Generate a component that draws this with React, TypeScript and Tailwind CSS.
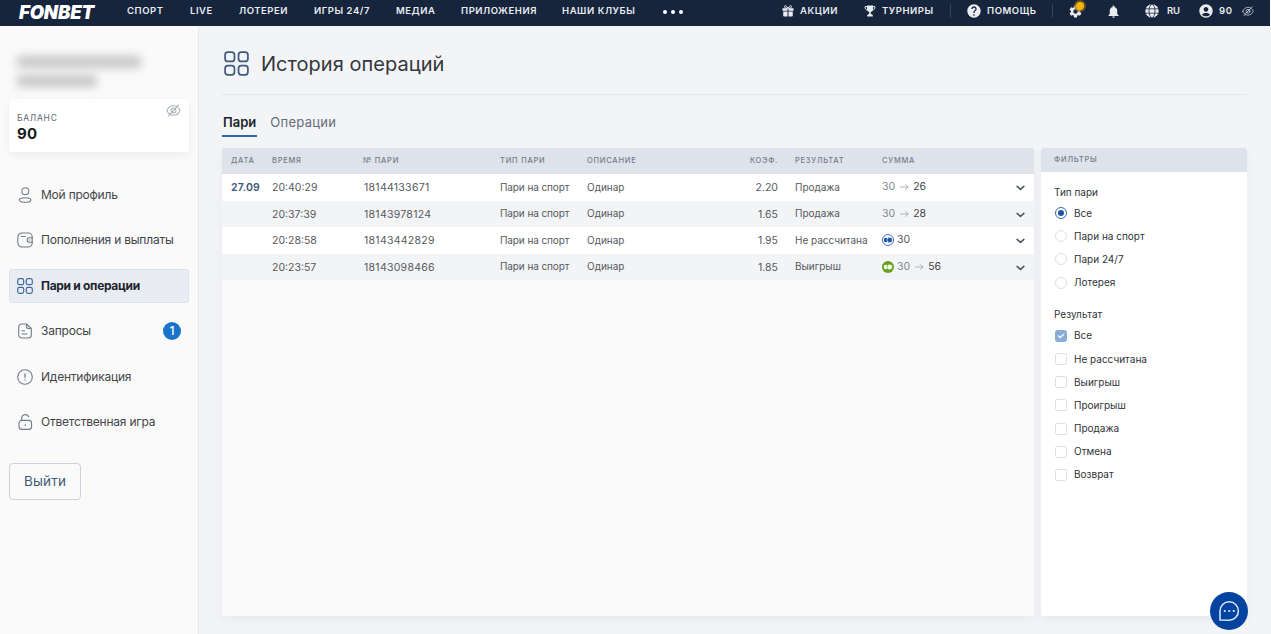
import type { ReactNode } from "react";
import { MdAccountCircle, MdHelp, MdNotifications, MdSettings } from "react-icons/md";

/** Common props for all outline icons */
const outline = {
  fill: "none",
  stroke: "currentColor",
  strokeWidth: 1.5,
  strokeLinecap: "round" as const,
  strokeLinejoin: "round" as const,
};

const Icons = {
  Grid: ({ className = "w-4 h-4", width = 1.2 }: { className?: string; width?: number }) => (
    <svg viewBox="0 0 16 16" className={className} {...outline} strokeWidth={width}>
      <rect x="0.7" y="0.7" width="6" height="6" rx="1.8" />
      <rect x="9.3" y="0.7" width="6" height="6" rx="1.8" />
      <rect x="0.7" y="9.3" width="6" height="6" rx="1.8" />
      <rect x="9.3" y="9.3" width="6" height="6" rx="1.8" />
    </svg>
  ),
  User: () => (
    <svg viewBox="0 0 16 16" className="w-4 h-4" {...outline} strokeWidth={1.1}>
      <circle cx="8.3" cy="4.2" r="3.5" />
      <ellipse cx="8.1" cy="13" rx="5.8" ry="2.3" />
    </svg>
  ),
  Wallet: () => (
    <svg viewBox="0 0 16 16" className="w-4 h-4" {...outline} strokeWidth={1.1}>
      <path d="M15.2 6.2V5a4 4 0 0 0-4-4H5a4.2 4.2 0 0 0-4.2 4.2v5.6A4.2 4.2 0 0 0 5 15h6.2a4 4 0 0 0 4-4V9.8M4.3 4.5h4" />
      <path d="M15.2 5.700h-2.700a2.300 2.300 0 0 0 0 4.600h2.700zM12.800 8h.4" />
    </svg>
  ),
  File: () => (
    <svg viewBox="0 0 16 16" className="w-4 h-4" {...outline} strokeWidth={1.1}>
      <path d="M9.5 1H5a3.3 3.3 0 0 0-3.3 3.3v7.4A3.3 3.3 0 0 0 5 15h6a3.3 3.3 0 0 0 3.3-3.3V5.5zM9.5 1v2.5a2 2 0 0 0 2 2h2.8M5 7.7h2.5M5 11h5" />
    </svg>
  ),
  Info: () => (
    <svg viewBox="0 0 16 16" className="w-4 h-4" {...outline} strokeWidth={1.1}>
      <circle cx="8" cy="8" r="7.3" />
      <path d="M8 4.800v3.700M8 11v.1" strokeWidth={1.3} />
    </svg>
  ),
  Lock: () => (
    <svg viewBox="0 0 16 16" className="w-4 h-4" {...outline} strokeWidth={1.1}>
      <rect x="2" y="6.4" width="12.6" height="9" rx="3" />
      <path d="M4.7 6.2V4.4a3.7 3.7 0 0 1 7-1.7M8.3 10.5v1" />
    </svg>
  ),
  EyeOff: ({ className }: { className?: string }) => (
    <svg viewBox="0 0 16 14" className={className} {...outline} strokeWidth={1.1}>
      <path d="M1 7c1-3 3.700-5.200 7-5.200S14 4 15 7c-1 3-3.700 5.200-7 5.200S2 10 1 7z" />
      <circle cx="8" cy="7" r="2.600" />
      <path d="M2.500 13 13.500 1M6 9l4-4.200" />
    </svg>
  ),
  Gift: () => (
    <svg viewBox="0 0 12 12" className="w-3 h-3" fill="currentColor">
      <path d="M.5 3.200h5v2.600h-5zM6.500 3.200h5v2.600h-5zM1.200 6.600h4.300v4.900H2.200a1 1 0 0 1-1-1zM6.500 6.600h4.300v3.900a1 1 0 0 1-1 1H6.500z" />
      <path d="M6 3.200C5 1 2.500-.2 2.400 1.700 2.300 3 4.500 3.200 6 3.200s3.700-.2 3.600-1.500C9.500-.2 7 1 6 3.200z" fill="none" stroke="currentColor" />
    </svg>
  ),
  Trophy: () => (
    <svg viewBox="0 0 12 12" className="w-3 h-3" fill="currentColor">
      <path d="M3 .5h6V4a3 3 0 0 1-6 0z" />
      <path d="M3 1.600H1.100C1 4 2 5 3.500 5M9 1.600h1.900C11 4 10 5 8.500 5" fill="none" stroke="currentColor" />
      <path d="M5.200 6h1.600v2.800l2 1.200v1.500H3.200V10l2-1.200z" />
    </svg>
  ),
  Globe: () => (
    <svg viewBox="0 0 14 14" className="w-3.5 h-3.5">
      <circle cx="7" cy="7" r="6.700" fill="currentColor" />
      <g fill="none" stroke="#16243c" strokeWidth="0.8">
        <ellipse cx="7" cy="7" rx="3" ry="6.700" />
        <path d="M.5 4.800h13M.5 9.200h13" />
      </g>
    </svg>
  ),
  Chevron: () => (
    <svg viewBox="0 0 10 6" className="w-[9px] h-[6px]" {...outline} strokeWidth={1.7}>
      <path d="M1.200 1.200 5 4.500l3.800-3.300" />
    </svg>
  ),
  Arrow: () => (
    <svg viewBox="0 0 9 8" className="w-[9px] h-2 text-[#a4a9b0]" {...outline} strokeWidth={0.9}>
      <path d="M.6 4h7.500M5.600 1.600 8.100 4 5.600 6.400" />
    </svg>
  ),
  Chat: () => (
    <svg viewBox="0 0 22 22" className="w-[22px] h-[22px]" {...outline}>
      <path d="M2 20V11a9.200 9.200 0 1 1 9.200 9.200z" />
      <path d="M6.700 11h.1M11.200 11h.1M15.700 11h.1" strokeWidth="2.100" />
    </svg>
  ),
};

/** Freebet mark next to the amount */
const CoinIcon = ({ won }: { won?: boolean }) => (
  <svg viewBox="0 0 12 12" className="w-3 h-3">
    {won ? (
      <circle cx="6" cy="6" r="6" fill="#65a11b" />
    ) : (
      <circle cx="6" cy="6" r="5.500" fill="#fff" stroke="#2a65ae" strokeWidth="0.9" />
    )}
    <circle cx="4" cy="6" r="2.200" fill={won ? "#fff" : "#1757a8"} />
    <circle cx="7.700" cy="6" r="2.700" fill={won ? "#fff" : "#1757a8"} stroke={won ? "#65a11b" : "#fff"} strokeWidth="0.6" />
  </svg>
);

const navItems = [
  { label: "СПОРТ", width: "w-[63px]" },
  { label: "LIVE", width: "w-[49px]" },
  { label: "ЛОТЕРЕИ", width: "w-[75px]" },
  { label: "ИГРЫ 24/7", width: "w-[82px]" },
  { label: "МЕДИА", width: "w-[65px]" },
  { label: "ПРИЛОЖЕНИЯ", width: "w-[101px]" },
  { label: "НАШИ КЛУБЫ", width: "w-[101px]" },
];

function Header() {
  return (
    <header className="flex h-[26px] w-[1270px] items-start bg-[#16243c] text-[9.500px] leading-5 font-semibold tracking-[0.55px] whitespace-nowrap text-[#e9edf2]">
      <div className="w-[127px] pt-0.5 pl-[19px]">
        <div className="text-[18.500px] leading-5 font-black tracking-[-0.15px] text-white italic">FONBET</div>
      </div>
      {navItems.map((item) => (
        <div key={item.label} className={`${item.width} pt-px`}>{item.label}</div>
      ))}
      <div className="flex w-[119px] gap-1 pt-[10px]">
        <i className="size-1 rounded-full bg-white" />
        <i className="size-1 rounded-full bg-white" />
        <i className="size-1 rounded-full bg-white" />
      </div>
      <div className="flex h-[22px] w-[82px] items-center gap-1.5"><Icons.Gift /><span>АКЦИИ</span></div>
      <div className="flex h-[22px] w-[86px] items-center gap-1.5"><Icons.Trophy /><span>ТУРНИРЫ</span></div>
      <div className="mt-1 h-3.5 w-4 border-l border-[#34435b]" />
      <div className="flex h-[22px] w-[86px] items-center gap-[5px]"><MdHelp className="size-4" /><span>ПОМОЩЬ</span></div>
      <div className="mt-1 h-3.5 w-4 border-l border-[#34435b]" />
      <div className="relative flex h-[22px] w-[38px] items-center">
        <MdSettings className="size-[15px]" />
        <i className="absolute top-0.5 left-[8px] size-2 rounded-full bg-[#f7b500] ring-2 ring-[#7f661f]/70" />
      </div>
      <div className="flex h-[22px] w-[39px] items-center"><MdNotifications className="size-[15px]" /></div>
      <div className="flex h-[22px] w-[53px] items-center gap-1.5"><Icons.Globe /><span className="pl-0.5 tracking-[-0.1px]">RU</span></div>
      <div className="flex h-[22px] items-center">
        <MdAccountCircle className="mr-[5px] size-4" />
        <span className="mr-2.5">90</span>
        <Icons.EyeOff className="w-3 text-[#c4cbd5]" />
      </div>
    </header>
  );
}

const menu: { label: string; icon: ReactNode; active?: boolean; badge?: number }[] = [
  { label: "Мой профиль", icon: <Icons.User /> },
  { label: "Пополнения и выплаты", icon: <Icons.Wallet /> },
  { label: "Пари и операции", icon: <Icons.Grid />, active: true },
  { label: "Запросы", icon: <Icons.File />, badge: 1 },
  { label: "Идентификация", icon: <Icons.Info /> },
  { label: "Ответственная игра", icon: <Icons.Lock /> },
];

function Sidebar() {
  return (
    <aside className="h-[608px] w-[199px] shrink-0 border-r border-[#e7e9ec] bg-[#fafafa] pl-[9px]">
      {/* account holder name, hidden */}
      <div className="flex h-[73px] flex-col gap-[7px] pt-[30px] pl-2">
        <div className="h-3 w-[124px] rounded bg-[#c6c6c6] blur-[5px]" />
        <div className="h-3 w-[80px] rounded bg-[#c6c6c6] blur-[5px]" />
      </div>
      <div className="flex h-[53px] w-[180px] justify-between rounded-[3px] bg-white pl-2 shadow-[0_3px_9px_rgba(0,0,0,0.06)]">
        <div>
          <div className="mt-[13px] text-[8.500px] leading-3 tracking-[0.75px] text-[#616873]">БАЛАНС</div>
          <div className="text-[15px] leading-5 font-bold tracking-[0.3px] text-[#171b20]">90</div>
        </div>
        <Icons.EyeOff className="mt-[5px] mr-2 h-[13px] w-[15px] text-[#aeb2b9]" />
      </div>
      <nav className="mt-[26px] flex flex-col gap-[11.400px]">
        {menu.map((item) => (
          <div
            key={item.label}
            className={`flex h-[34px] w-[180px] items-center gap-2 rounded-[3px] border pr-[7px] pl-[7px] text-[12px] whitespace-nowrap ${
              item.active ? "border-[#dce2e9] bg-[#e9edf3] font-bold text-[#1e242c]" : "border-transparent text-[#434548]"
            }`}
          >
            <span className={item.active ? "text-[#41699f]" : "text-[#737b86]"}>{item.icon}</span>
            <span className={item.active ? "tracking-[-0.3px]" : "tracking-[-0.22px]"}>{item.label}</span>
            {item.badge && (
              <b className="ml-auto flex size-[18px] items-center justify-center rounded-full bg-[#1874c8] text-[12px] font-medium text-white">{item.badge}</b>
            )}
          </div>
        ))}
      </nav>
      <button className="mt-6 block h-[37px] w-[72px] rounded border border-[#cbd1da] text-[13.500px] tracking-[0.2px] text-[#435a78]">Выйти</button>
    </aside>
  );
}

const bets = [
  { date: "27.09", time: "20:40:29", id: "18144133671", coef: "2.20", result: "Продажа", stake: 30, payout: 26 },
  { date: "", time: "20:37:39", id: "18143978124", coef: "1.65", result: "Продажа", stake: 30, payout: 28 },
  { date: "", time: "20:28:58", id: "18143442829", coef: "1.95", result: "Не рассчитана", stake: 30, coin: true },
  { date: "", time: "20:23:57", id: "18143098466", coef: "1.85", result: "Выигрыш", stake: 30, payout: 56, coin: true },
];

const columns = "grid grid-cols-[41px_91px_137px_87px_100px_91px_17px_87px_1fr] items-center pl-[9px] pr-[9px] whitespace-nowrap";

function BetsTable() {
  return (
    <section className="h-[468px] w-[812px] overflow-hidden rounded-[3px] bg-[#fafafa] shadow-[0_4px_10px_rgba(40,60,90,0.05)]">
      <div className={`${columns} h-[26px] bg-[#dee2ea] text-[7.500px] font-medium tracking-[0.75px] text-[#737d8b]`}>
        <span>ДАТА</span>
        <span>ВРЕМЯ</span>
        <span>№ ПАРИ</span>
        <span>ТИП ПАРИ</span>
        <span>ОПИСАНИЕ</span>
        <span className="text-right">КОЭФ.</span>
        <span />
        <span>РЕЗУЛЬТАТ</span>
        <span>СУММА</span>
      </div>
      {bets.map((bet, i) => (
        <div key={bet.id} className={`${columns} h-[26.500px] text-[10.500px] text-[#565a60] ${i % 2 ? "bg-[#f3f4f6]" : "bg-white"}`}>
          <span className="pt-0.5 font-semibold tracking-[0.2px] text-[#3e5877]">{bet.date}</span>
          <span className="pt-0.5">{bet.time}</span>
          <span className="pt-0.5 pl-px tracking-[0.28px]">{bet.id}</span>
          <span className="text-[10px] tracking-[-0.1px]">Пари на спорт</span>
          <span className="text-[10px]">Одинар</span>
          <span className="pt-0.5 text-right">{bet.coef}</span>
          <span />
          <span className="text-[10px] tracking-[-0.03px]">{bet.result}</span>
          <div className="flex items-center">
            {bet.coin && <span className="mr-[3px]"><CoinIcon won={!!bet.payout} /></span>}
            <span className={bet.payout ? "text-[#83888f]" : ""}>{bet.stake}</span>
            {bet.payout && (
              <>
                <span className="mx-[4.500px]"><Icons.Arrow /></span>
                <span className="text-[#3e4349]">{bet.payout}</span>
              </>
            )}
            <span className="mt-0.5 ml-auto text-[#4c5560]"><Icons.Chevron /></span>
          </div>
        </div>
      ))}
    </section>
  );
}

const betTypes = ["Все", "Пари на спорт", "Пари 24/7", "Лотерея"];
const results = ["Все", "Не рассчитана", "Выигрыш", "Проигрыш", "Продажа", "Отмена", "Возврат"];

function Filters() {
  return (
    <section className="h-[468px] w-[206px] overflow-hidden rounded-[3px] bg-white text-[10px] text-[#303439] shadow-[0_4px_10px_rgba(40,60,90,0.05)]">
      <div className="flex h-6 items-center bg-[#dee2ea] pl-[13px] text-[7.500px] font-medium tracking-[0.75px] text-[#737d8b]">ФИЛЬТРЫ</div>
      <div className="pl-[13px]">
        <div className="mt-3 h-[17.500px] leading-4">Тип пари</div>
        {betTypes.map((label, i) => (
          <label key={label} className="flex h-[23.200px] items-center gap-[7px] pl-px">
            <span className={`flex size-3 items-center justify-center rounded-full border ${i === 0 ? "border-[#386daa]" : "border-[#dcdee2]"}`}>
              {i === 0 && <i className="size-1.5 rounded-full bg-[#1b559f]" />}
            </span>
            {label}
          </label>
        ))}
        <div className="mt-3 h-[18px] leading-4">Результат</div>
        {results.map((label, i) => (
          <label key={label} className="flex h-[23.200px] items-center gap-[7px] pl-px">
            <span className={`flex size-3 items-center justify-center rounded-[2.500px] border ${i === 0 ? "border-[#89acd8] bg-[#89acd8]" : "border-[#dcdee2]"}`}>
              {i === 0 && (
                <svg viewBox="0 0 8 8" className="size-2 text-white" {...outline} strokeWidth={1.2}>
                  <path d="m1.500 4 1.700 1.500L6.600 2.500" />
                </svg>
              )}
            </span>
            {label}
          </label>
        ))}
      </div>
    </section>
  );
}

export default function App() {
  return (
    <div className="relative h-[634px] w-[1271px] overflow-hidden bg-[#f3f4f6] font-['Inter','Noto_Sans',sans-serif]">
      <Header />
      <div className="flex">
        <Sidebar />
        <main className="pl-[23px]">
          <div className="flex h-[69px] w-[1025px] items-center border-b border-[#e4e6ea] pt-[7px] pl-0.5">
            <Icons.Grid className="h-[25px] w-[25px] text-[#40597c]" width={1.1} />
            <h1 className="ml-3 pt-px text-[20px] tracking-[0.03px] text-[#34373c]">История операций</h1>
          </div>
          <div className="mt-[15px] flex h-[27px] gap-[13px] text-[13px] leading-[25px]">
            <div className="h-[27px] border-b-2 border-[#2f66a7] px-px font-semibold text-[#20242a]">Пари</div>
            <div className="tracking-[0.3px] text-[#656d79]">Операции</div>
          </div>
          <div className="mt-[11px] flex gap-[7px]">
            <BetsTable />
            <Filters />
          </div>
        </main>
      </div>
      <div className="absolute top-[591.500px] left-[1210px] flex size-[38px] items-center justify-center rounded-full bg-[#0444a0] text-[#d8ecff]">
        <Icons.Chat />
      </div>
    </div>
  );
}
